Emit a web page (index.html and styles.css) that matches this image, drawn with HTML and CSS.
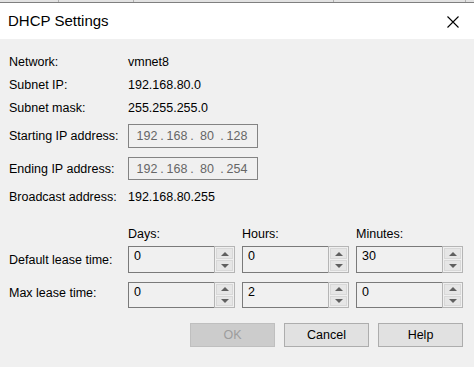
FILE: index.html
```html
<!DOCTYPE html>
<html lang="en">
    <head>
        <title>DHCP Settings</title>
        <meta charset="UTF-8"/>
        <link rel="stylesheet" href="styles.css">
    </head>
    <body>
        <div id="strip">
            <span class="sep s1"></span>
            <span class="sep s2"></span>
            <span class="sep s3"></span>
            <span class="sep s4"></span>
        </div>
        <div id="titlebar">
            <span class="title">DHCP Settings</span>
            <svg class="close" width="12" height="12" viewBox="0 0 12 12">
                <path d="M0.5 0.5 L11.5 11.5 M11.5 0.5 L0.5 11.5" stroke="#000" stroke-width="1.1" fill="none"/>
            </svg>
        </div>

        <div id="dialog">
            <div class="row first">
                <span class="label">Network:</span>
                <span class="value">vmnet8</span>
            </div>
            <div class="row">
                <span class="label">Subnet IP:</span>
                <span class="value">192.168.80.0</span>
            </div>
            <div class="row">
                <span class="label">Subnet mask:</span>
                <span class="value">255.255.255.0</span>
            </div>
            <div class="row iprow start">
                <span class="label">Starting IP address:</span>
                <div class="ipbox">
                    <span class="oct">192</span><span class="dot">.</span><span class="oct">168</span><span class="dot">.</span><span class="oct">80</span><span class="dot">.</span><span class="oct">128</span>
                </div>
            </div>
            <div class="row iprow end">
                <span class="label">Ending IP address:</span>
                <div class="ipbox">
                    <span class="oct">192</span><span class="dot">.</span><span class="oct">168</span><span class="dot">.</span><span class="oct">80</span><span class="dot">.</span><span class="oct">254</span>
                </div>
            </div>
            <div class="row broadcast">
                <span class="label">Broadcast address:</span>
                <span class="value">192.168.80.255</span>
            </div>

            <div class="lease">
                <span></span>
                <span class="head">Days:</span>
                <span class="head">Hours:</span>
                <span class="head">Minutes:</span>

                <span class="label">Default lease time:</span>
                <div class="spin"><span class="field">0</span><span class="btns"><span class="up"></span><span class="down"></span></span></div>
                <div class="spin"><span class="field">0</span><span class="btns"><span class="up"></span><span class="down"></span></span></div>
                <div class="spin"><span class="field">30</span><span class="btns"><span class="up"></span><span class="down"></span></span></div>

                <span class="label">Max lease time:</span>
                <div class="spin"><span class="field">0</span><span class="btns"><span class="up"></span><span class="down"></span></span></div>
                <div class="spin"><span class="field">2</span><span class="btns"><span class="up"></span><span class="down"></span></span></div>
                <div class="spin"><span class="field">0</span><span class="btns"><span class="up"></span><span class="down"></span></span></div>
            </div>

            <div class="buttons">
                <button class="btn disabled">OK</button>
                <button class="btn">Cancel</button>
                <button class="btn">Help</button>
            </div>
        </div>
    </body>
</html>
```

FILE: styles.css
```css
* {
    margin: 0px;
    padding: 0px;
    box-sizing: border-box;
}

body {
    width: 474px;
    height: 367px;
    overflow: hidden;
    background: #f0f0f0;
    font-family: "Liberation Sans", Arial, sans-serif;
    font-size: 12.5px;
    color: #000;
}

#strip {
    position: relative;
    height: 3px;
    background: #e2e2e2;
    border-bottom: 1px solid #7f7f7f;
}

.sep {
    position: absolute;
    top: 0px;
    width: 1px;
    height: 2px;
    background: #b0b0b0;
}
.s1 { left: 58px; }
.s2 { left: 133px; }
.s3 { left: 333px; }
.s4 { left: 465px; }

#titlebar {
    height: 36px;
    background: #fff;
    display: flex;
    align-items: center;
    justify-content: space-between;
    padding: 0px 15px 0px 8px;
}

.title {
    font-size: 15px;
    margin-top: -1px;
}

.close {
    display: block;
    margin-top: 2px;
}

#dialog {
    height: 326px;
    padding: 0px 11px 0px 9px;
    border-bottom: 2px solid #6c6c6c;
}

.row {
    display: flex;
    align-items: center;
    height: 23px;
}

.row.first {
    margin-top: 11px;
}

.label {
    width: 119px;
    flex-shrink: 0;
}

.iprow.start {
    margin-top: 5px;
    height: 24px;
}

.iprow.end {
    margin-top: 9px;
    height: 23px;
}

.broadcast {
    margin-top: 5px;
}

.ipbox {
    width: 130px;
    height: 100%;
    border: 1px solid #838383;
    padding-left: 5px;
    display: flex;
    align-items: center;
    color: #666;
    font-size: 12.5px;
}

.oct {
    width: 26px;
    text-align: center;
}

.dot {
    width: 4px;
    text-align: center;
}

.lease {
    margin-top: 16px;
    display: grid;
    grid-template-columns: 112px 107px 107px 107px;
    grid-template-rows: 18px 27px 26px;
    column-gap: 7px;
    row-gap: 4px;
    align-items: center;
}

.lease .label {
    width: auto;
}

.lease > :nth-child(n+9) {
    margin-top: 5px;
}

.head {
    margin-top: 1px;
}

.spin {
    display: flex;
    height: 100%;
    align-self: stretch;
}

.field {
    flex: 1;
    border: 1px solid #7a7a7a;
    border-right: none;
    padding: 2px 0px 0px 5px;
    line-height: 15px;
}

.btns {
    width: 21px;
    border: 1px solid #b5b5b5;
    display: flex;
    flex-direction: column;
    padding: 1px;
    gap: 1px;
}

.up, .down {
    flex: 1;
    background: #e6e6e6;
    border: 1px solid #d8d8d8;
    position: relative;
}

.up::after, .down::after {
    content: "";
    position: absolute;
    left: 50%;
    top: 50%;
    margin-left: -4px;
    border-left: 4px solid transparent;
    border-right: 4px solid transparent;
}

.up::after {
    margin-top: -2px;
    border-bottom: 4px solid #606060;
}

.down::after {
    margin-top: -2px;
    border-top: 4px solid #606060;
}

.buttons {
    margin-top: 20px;
    display: flex;
    justify-content: flex-end;
    gap: 9px;
}

.btn {
    width: 85px;
    height: 24px;
    background: #e1e1e1;
    border: 1px solid #adadad;
    font-family: "Liberation Sans", Arial, sans-serif;
    font-size: 12.5px;
    color: #000;
}

.btn.disabled {
    background: #cccccc;
    border-color: #bfbfbf;
    color: #9d9d9d;
}
```
